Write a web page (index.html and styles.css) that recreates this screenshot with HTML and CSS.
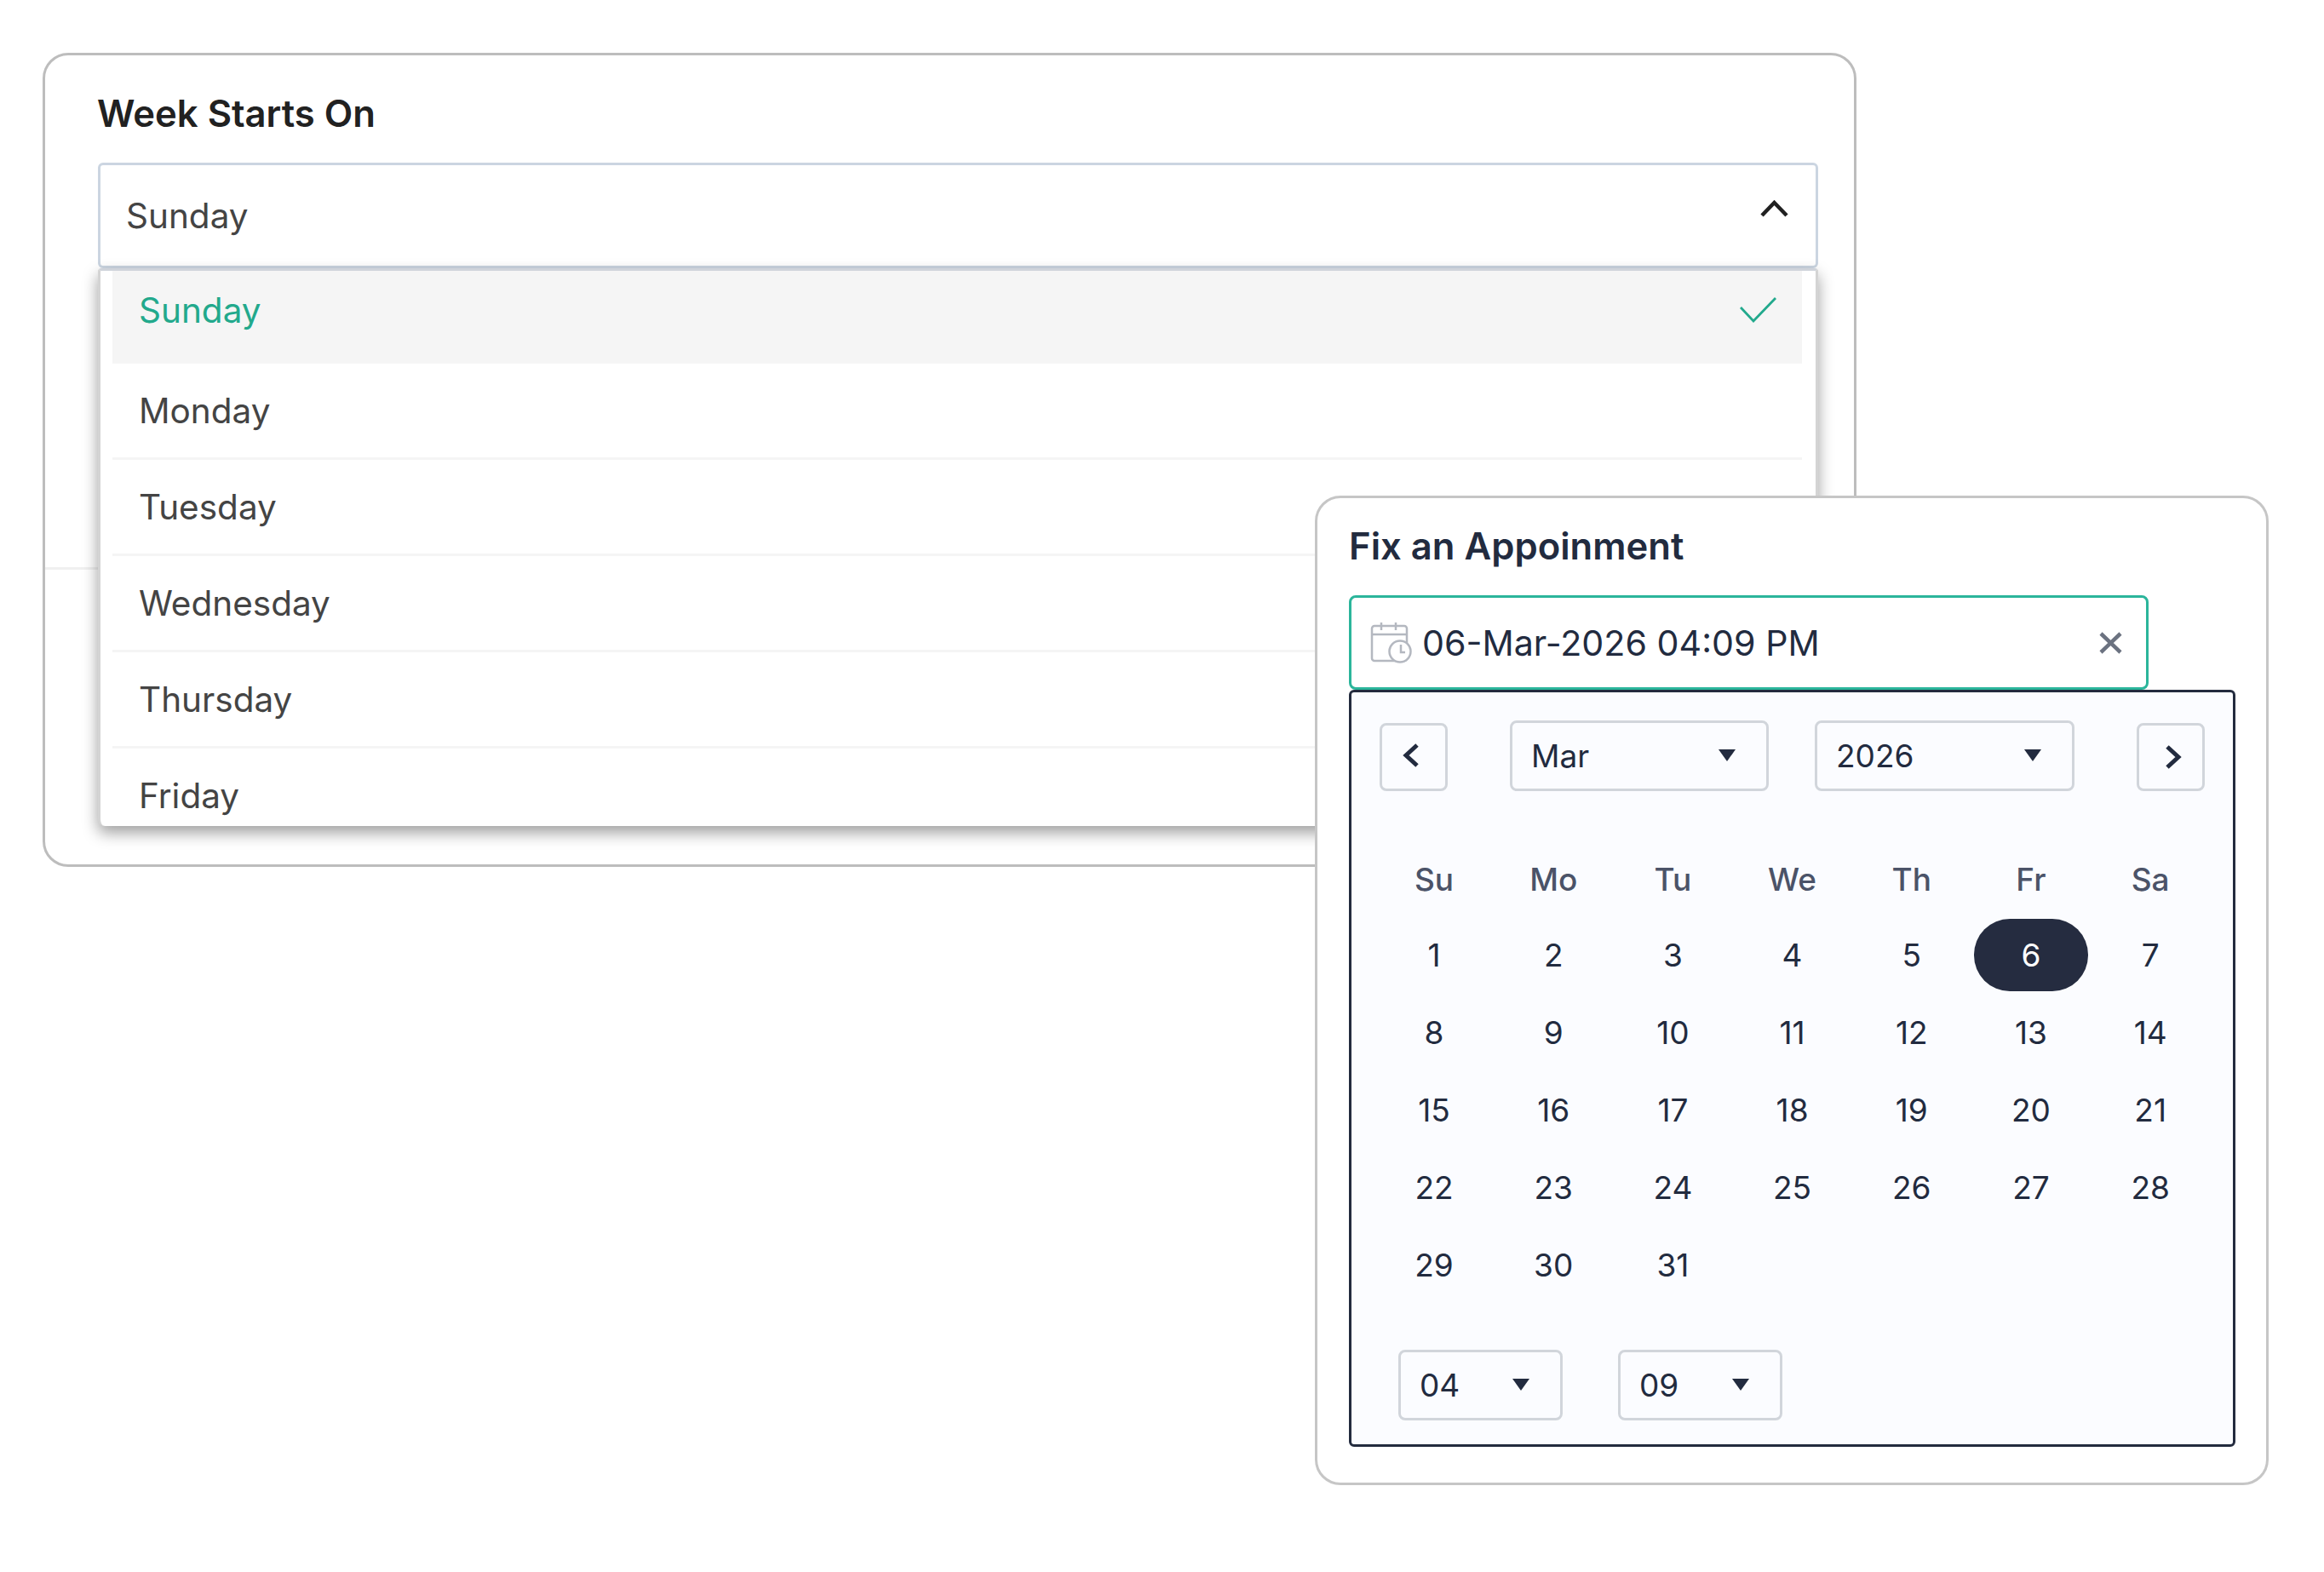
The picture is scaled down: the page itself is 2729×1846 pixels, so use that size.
FILE: index.html
```html
<!DOCTYPE html>
<html lang="en">
<head>
    <meta charset="UTF-8">
    <meta name="viewport" content="width=device-width, initial-scale=1.0">
    <title>Week start and appointment picker</title>
    <link rel="stylesheet" href="styles.css">
</head>
<body>
    <div class="canvas">

        <!-- Week start dropdown -->
        <section class="week-card">
            <h2 class="week-title">Week Starts On</h2>
            <div class="week-select">
                <div class="week-value">
                    <span>Sunday</span>
                    <svg class="chevron-up" width="33" height="20" viewBox="0 0 33 20"><polyline points="2,18 16.5,3 31,18"/></svg>
                </div>
                <ul class="week-menu">
                    <li class="week-option active">
                        <span>Sunday</span>
                        <svg class="tick" width="43" height="30" viewBox="0 0 43 30"><polyline points="1,12 16,28 42,1"/></svg>
                    </li>
                    <li class="week-option">Monday</li>
                    <li class="week-option">Tuesday</li>
                    <li class="week-option">Wednesday</li>
                    <li class="week-option">Thursday</li>
                    <li class="week-option">Friday</li>
                </ul>
            </div>
            <div class="week-divider"></div>
        </section>

        <!-- Appointment date picker -->
        <section class="appt-card">
            <h2 class="appt-title">Fix an Appoinment</h2>
            <div class="date-input">
                <svg class="cal-icon" width="50" height="50" viewBox="0 0 50 50">
                    <rect x="3" y="5" width="41" height="41" rx="3"/>
                    <line x1="3" y1="15" x2="44" y2="15"/>
                    <line x1="14" y1="1" x2="14" y2="10"/>
                    <line x1="31" y1="1" x2="31" y2="10"/>
                    <circle cx="36" cy="35" r="12.5"/>
                    <polyline points="37,27 37,36 42,36"/>
                </svg>
                <span class="date-text">06-Mar-2026 04:09 PM</span>
                <svg class="clear-icon" width="27" height="26" viewBox="0 0 27 26"><path d="M2 2 25 24M25 2 2 24"/></svg>
            </div>

            <div class="calendar">
                <div class="cal-nav">
                    <button class="nav-btn prev">
                        <svg width="20" height="28" viewBox="0 0 20 28"><polyline points="17,2 4,14 17,26"/></svg>
                    </button>
                    <div class="pick month"><span>Mar</span><i class="caret"></i></div>
                    <div class="pick year"><span>2026</span><i class="caret"></i></div>
                    <button class="nav-btn next">
                        <svg width="20" height="28" viewBox="0 0 20 28"><polyline points="3,2 16,14 3,26"/></svg>
                    </button>
                </div>

                <div class="cal-grid">
                    <span class="dow">Su</span><span class="dow">Mo</span><span class="dow">Tu</span><span class="dow">We</span><span class="dow">Th</span><span class="dow">Fr</span><span class="dow">Sa</span>
                    <span class="day">1</span><span class="day">2</span><span class="day">3</span><span class="day">4</span><span class="day">5</span><span class="day selected">6</span><span class="day">7</span>
                    <span class="day">8</span><span class="day">9</span><span class="day">10</span><span class="day">11</span><span class="day">12</span><span class="day">13</span><span class="day">14</span>
                    <span class="day">15</span><span class="day">16</span><span class="day">17</span><span class="day">18</span><span class="day">19</span><span class="day">20</span><span class="day">21</span>
                    <span class="day">22</span><span class="day">23</span><span class="day">24</span><span class="day">25</span><span class="day">26</span><span class="day">27</span><span class="day">28</span>
                    <span class="day">29</span><span class="day">30</span><span class="day">31</span>
                </div>

                <div class="cal-time">
                    <div class="pick hour"><span>04</span><i class="caret"></i></div>
                    <div class="pick minute"><span>09</span><i class="caret"></i></div>
                </div>
            </div>
        </section>

    </div>
</body>
</html>
```

FILE: styles.css
```css
* {
    box-sizing: border-box;
}

body {
    margin: 0;
    background-color: #fff;
    font-family: Inter, "Liberation Sans", sans-serif;
}

.canvas {
    position: relative;
    width: 2729px;
    height: 1846px;
    padding: 62px 0 0 50px;
    overflow: hidden;
}

/* Week start card */
.week-card {
    width: 2130px;
    height: 956px;
    padding: 41px 42px 0 62px;
    border: 3px solid #bdbdbd;
    border-radius: 30px;
}

.week-title {
    margin: 0 0 29px -1px;
    font-size: 43.6px;
    line-height: 56px;
    font-weight: 600;
    color: #212121;
}

.week-select {
    position: relative;
}

.week-value {
    display: flex;
    justify-content: space-between;
    align-items: center;
    height: 124px;
    padding: 0 32px 0 30px;
    border: 3px solid #cbd5e1;
    border-radius: 6px;
    font-size: 40.5px;
    color: #444;
}

.chevron-up {
    margin-bottom: 16px;
}

.chevron-up polyline {
    fill: none;
    stroke: #212121;
    stroke-width: 4.5;
}

.week-menu {
    position: absolute;
    top: 124px;
    left: 0;
    width: 2020px;
    height: 655px;
    margin: 0;
    padding: 0 16px 0 14px;
    list-style: none;
    overflow: hidden;
    background-color: #fff;
    border-top: 3px solid #cfd3da;
    border-left: 3px solid #d4d4d4;
    border-right: 3px solid #d4d4d4;
    border-radius: 4px 4px 8px 8px;
    box-shadow: 0 8px 18px rgba(0, 0, 0, 0.38);
    font-size: 40.5px;
    color: #444;
}

.week-option {
    display: flex;
    justify-content: space-between;
    align-items: center;
    flex-shrink: 0;
    height: 113px;
    padding: 0 30px 0 31px;
    border-bottom: 3px solid #f5f5f5;
}

.week-option.active {
    height: 109px;
    padding-bottom: 17px;
    border-bottom: none;
    background-color: #f5f5f5;
    color: #22a98c;
}

.tick polyline {
    fill: none;
    stroke: #22a98c;
    stroke-width: 2.8;
}

.week-divider {
    height: 3px;
    margin: 351px -42px 0 -62px;
    background-color: #f0f0f0;
}

/* Appointment card */
.appt-card {
    position: absolute;
    left: 1544px;
    top: 582px;
    width: 1120px;
    height: 1162px;
    padding: 29px 37px 0;
    background-color: #fff;
    border: 3px solid #c6c6c6;
    border-radius: 30px;
}

.appt-title {
    margin: 0 0 29px;
    font-size: 43.6px;
    line-height: 56px;
    font-weight: 600;
    color: #222b3f;
}

.date-input {
    display: flex;
    align-items: center;
    width: 939px;
    height: 111px;
    padding: 0 28px 0 21px;
    background-color: #fff;
    border: 3px solid #2bb59b;
    border-radius: 8px;
    color: #222b3f;
}

.cal-icon {
    flex-shrink: 0;
    fill: none;
    stroke: #b4b8c0;
    stroke-width: 2.5;
}

.cal-icon circle {
    fill: #fff;
}

.date-text {
    flex: 1;
    margin-left: 12px;
    font-size: 41.2px;
}

.clear-icon path {
    fill: none;
    stroke: #6b7280;
    stroke-width: 4.5;
}

.calendar {
    width: 1041px;
    height: 889px;
    padding: 33px 28px 0 30px;
    background-color: #fbfcff;
    border: 3px solid #232b3e;
    border-radius: 6px;
}

.cal-nav {
    display: flex;
    align-items: flex-end;
    height: 83px;
    margin-left: 3px;
}

.nav-btn {
    display: flex;
    align-items: center;
    justify-content: center;
    width: 80px;
    height: 80px;
    padding: 0;
    background: none;
    border: 3px solid #d1d5db;
    border-radius: 8px;
}

.nav-btn polyline {
    fill: none;
    stroke: #222b3f;
    stroke-width: 5;
}

.nav-btn.prev svg {
    margin: 0 6px 4px 0;
}

.nav-btn.next {
    margin-left: 73px;
}

.nav-btn.next svg {
    margin-left: 5px;
}

.pick {
    display: flex;
    align-items: center;
    justify-content: space-between;
    height: 83px;
    padding: 0 36px 0 22px;
    border: 3px solid #d1d5db;
    border-radius: 8px;
    font-size: 37px;
    color: #222b3f;
}

.pick.month {
    width: 304px;
    margin-left: 73px;
}

.pick.year {
    width: 305px;
    margin-left: 54px;
}

.pick.hour,
.pick.minute {
    width: 193px;
}

.caret {
    width: 0;
    height: 0;
    margin-top: -2px;
    border-top: 14px solid #222b3f;
    border-left: 10.5px solid transparent;
    border-right: 10.5px solid transparent;
}

.cal-grid {
    display: grid;
    grid-template-columns: repeat(7, 134px);
    grid-auto-rows: 85px;
    column-gap: 6.2px;
    row-gap: 6px;
    margin-top: 59px;
}

.dow,
.day {
    display: flex;
    align-items: center;
    justify-content: center;
    font-size: 37px;
}

.dow {
    padding-top: 3px;
    font-weight: 500;
    color: #4b5368;
}

.day {
    color: #222b3f;
}

.day.selected {
    background-color: #252c40;
    border-radius: 42px;
    color: #fff;
}

.cal-time {
    display: flex;
    gap: 65px;
    margin: 57px 0 0 25px;
}
```
